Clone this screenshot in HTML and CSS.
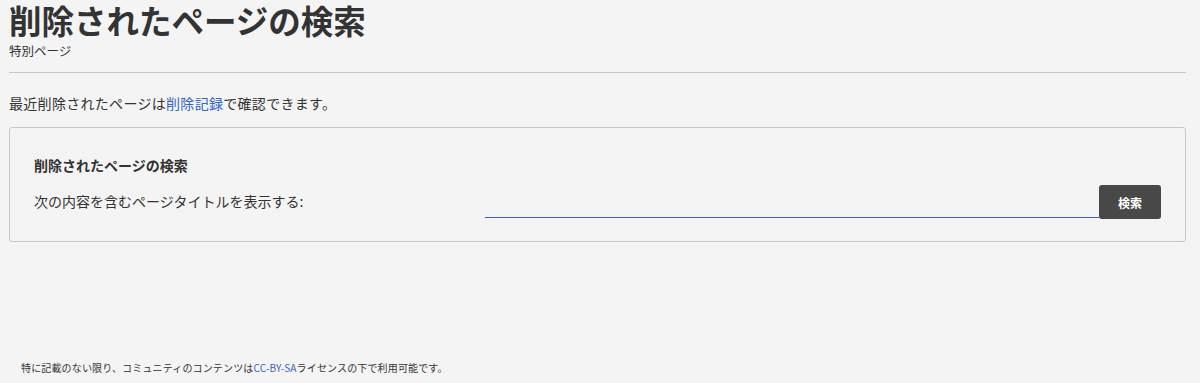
FILE: index.html
```html
<!DOCTYPE html>
<html lang="ja">
<head>
    <meta charset="UTF-8">
    <meta name="viewport" content="width=device-width, initial-scale=1.0">
    <title>削除されたページの検索</title>
    <link rel="stylesheet" href="styles.css">
</head>
<body>

    <div class="page">
        <h1 class="page-title">削除されたページの検索</h1>
        <div class="page-sub">特別ページ</div>
        <hr class="divider">

        <p class="intro">最近削除されたページは<a href="#">削除記録</a>で確認できます。</p>

        <form class="search-box">
            <h2 class="search-heading">削除されたページの検索</h2>
            <div class="search-row">
                <label for="prefix" class="search-label">次の内容を含むページタイトルを表示する:</label>
                <input type="text" id="prefix" name="prefix" class="search-input">
                <button type="submit" class="search-btn">検索</button>
            </div>
        </form>
    </div>

    <footer class="footer">
        特に記載のない限り、コミュニティのコンテンツは<a href="#">CC-BY-SA</a>ライセンスの下で利用可能です。
    </footer>

</body>
</html>
```

FILE: styles.css
```css
html, body {
    height: 100%;
}

body {
    margin: 0;
    background-color: #f4f4f4;
    color: #333;
    font-family: "Noto Sans CJK JP", "Noto Sans", sans-serif;
    display: flex;
    flex-direction: column;
}

a {
    color: #3366cc;
    text-decoration: none;
}

.page {
    padding: 0 14px 0 9px;
}

.page-title {
    margin: 0;
    font-size: 32.5px;
    line-height: 40px;
    font-weight: bold;
    color: #333;
}

.page-sub {
    margin-top: 2px;
    font-size: 12.5px;
    line-height: 18px;
}

.divider {
    margin: 12px 0 0;
    border: none;
    border-top: 1px solid #c8c8c8;
}

.intro {
    margin: 20px 0 14px;
    font-size: 14px;
    line-height: 20px;
    letter-spacing: 0.3px;
}

.search-box {
    border: 1px solid #c8c8c8;
    border-radius: 3px;
    padding: 27px 24px 23px;
}

.search-heading {
    margin: 0 0 9px;
    font-size: 14px;
    line-height: 20px;
    font-weight: bold;
}

.search-row {
    display: flex;
    align-items: flex-end;
}

.search-label {
    width: 451px;
    font-size: 14px;
    line-height: 34px;
}

.search-input {
    flex: 1;
    height: 34px;
    box-sizing: border-box;
    border: none;
    border-bottom: 1px solid #3366cc;
    background: transparent;
    padding: 0 6px;
    font-size: 14px;
    font-family: inherit;
    outline: none;
}

.search-btn {
    width: 62px;
    height: 34px;
    margin-bottom: -1px;
    border: none;
    border-radius: 3px;
    background-color: #484848;
    color: white;
    font-family: inherit;
    font-size: 12px;
    font-weight: bold;
    cursor: pointer;
}

.footer {
    margin-top: auto;
    padding: 0 0 8px 21px;
    font-size: 10px;
    line-height: 14px;
    letter-spacing: 0.15px;
}
```
